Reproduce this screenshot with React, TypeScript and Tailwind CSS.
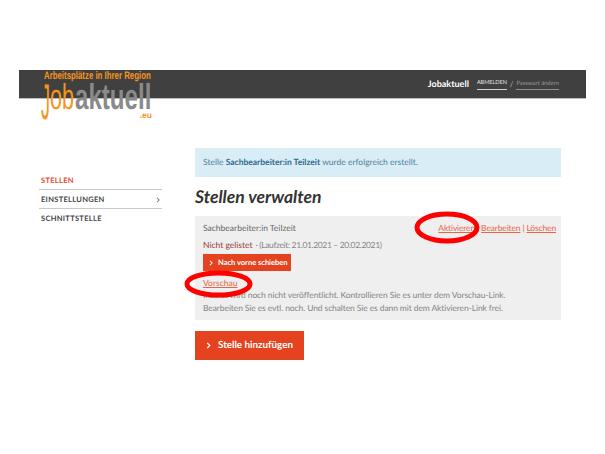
const font = "font-['Lato','Noto_Sans',sans-serif] [text-rendering:geometricPrecision]";

function Chevron({ className }: { className?: string }) {
  return (
    <svg viewBox="0 0 8 8" className={className} fill="none" stroke="currentColor" strokeWidth="1.4">
      <path d="M2.5 1 L5.5 4 L2.5 7" />
    </svg>
  );
}

function Logo() {
  return (
    <div className="absolute left-[44px] top-[71px] w-[108px] h-[52px] font-['Liberation_Sans',sans-serif] whitespace-nowrap">
      <div className="text-[#f7941d] text-[11px] font-bold leading-[11px] origin-left scale-x-[0.713]">
        Arbeitsplätze in Ihrer Region
      </div>
      <div className="absolute left-[-3px] top-[11px] text-[#f7941d] text-[50px] leading-[40px] origin-left scale-x-[0.36]">J</div>
      <div className="absolute left-[6px] top-[12px] text-[#f7941d] text-[36px] leading-[28px] origin-left scale-x-[0.6]">ob</div>
      <div className="absolute left-[31px] top-[12px] text-[#8a8a8a] text-[36px] font-bold leading-[28px] origin-left scale-x-[0.67]">aktuell</div>
      <div className="absolute right-0 top-[40px] text-[#f7941d] text-[8.5px] leading-[9px] font-bold">.eu</div>
    </div>
  );
}

function Header() {
  return (
    <header className="h-[29px] bg-[#404040] border-b-[1px] border-[#bdbdbd] flex items-center justify-end pr-[27px] whitespace-nowrap">
      <span className="text-white text-[9px] font-bold mr-[8px]">Jobaktuell</span>
      <a className="text-[#e0e0e0] text-[5.5px] border-b border-[#cfcfcf] leading-[11px]">ABMELDEN</a>
      <span className="text-[#bdbdbd] text-[8px] mx-[3px]">/</span>
      <a className="text-[#999] text-[5.8px] border-b border-[#8f8f8f] leading-[11px]">Passwort ändern</a>
    </header>
  );
}

function Sidebar() {
  return (
    <nav className="w-[123px] ml-[20px] text-[7.5px] font-bold tracking-[0.3px] shrink-0 pt-[23px]">
      <div className="h-[19px] flex items-center pl-[2px] pt-[1px] text-[#e8452a] border-b border-[#c9c9c9]">STELLEN</div>
      <div className="h-[19px] flex items-center justify-between pl-[2px] pt-[1px] pr-[1px] text-[#444] border-b border-[#c9c9c9]">
        EINSTELLUNGEN
        <Chevron className="w-[6px] h-[6px] text-[#777]" />
      </div>
      <div className="h-[19px] flex items-center pl-[2px] text-[#444]">SCHNITTSTELLE</div>
    </nav>
  );
}

function JobCard() {
  return (
    <section className="mt-[9px] h-[104px] bg-[#efefef] px-[8px] pt-[5px] text-[8.5px] text-[#858585] whitespace-nowrap">
      <div className="flex justify-between h-[14px] items-center">
        <span className="text-[#666]">Sachbearbeiter:in Teilzeit</span>
        <span className="text-[#e8654a] mr-[-3px] tracking-[-0.15px]">
          <a className="underline">Aktivieren</a> | <a className="underline">Bearbeiten</a> | <a className="underline">Löschen</a>
        </span>
      </div>
      <div className="mt-[3px] h-[14px] flex items-center">
        <span className="text-[#9a3b3b]">Nicht gelistet</span>
        <span className="ml-[3px] tracking-[-0.35px]">· (Laufzeit: 21.01.2021 – 20.02.2021)</span>
      </div>
      <a className="mt-[2px] w-[88px] h-[17px] bg-[#e5431f] text-white text-[7.5px] font-bold flex items-center pl-[5px] gap-[4px]">
        <Chevron className="w-[6px] h-[6px]" />
        Nach vorne schieben
      </a>
      <div className="mt-[5px] h-[14px] flex items-center">
        <a className="underline text-[#e8654a]">Vorschau</a>
      </div>
      <p className="leading-[13px] mt-[-1px] tracking-[-0.1px]">
        Inserat wird noch nicht veröffentlicht. Kontrollieren Sie es unter dem Vorschau-Link.
        <br />
        Bearbeiten Sie es evtl. noch. Und schalten Sie es dann mit dem Aktivieren-Link frei.
      </p>
    </section>
  );
}

export default function App() {
  return (
    <div className={`relative w-[605px] h-[454px] bg-white overflow-hidden pt-[70px] px-[19px] ${font}`}>
      <Header />
      <Logo />
      <div className="flex mt-[49px]">
        <Sidebar />
        <main className="ml-[33px] w-[366px]">
          <div className="h-[29px] bg-[#d9edf7] text-[#4f7f99] text-[8.5px] flex items-center pl-[8px]">
            <span>
              Stelle <b className="text-[#2f6a8a]">Sachbearbeiter:in Teilzeit</b> wurde erfolgreich erstellt.
            </span>
          </div>
          <h1 className="mt-[10px] h-[20px] leading-[20px] text-[17.5px] font-bold italic text-[#333]">Stellen verwalten</h1>
          <JobCard />
          <a className="mt-[11px] w-[109px] h-[29px] bg-[#e5431f] text-white text-[9.8px] font-bold flex items-center pl-[10px] gap-[6px] whitespace-nowrap">
            <Chevron className="w-[7px] h-[7px]" />
            Stelle hinzufügen
          </a>
        </main>
      </div>
      <svg viewBox="0 0 605 454" className="absolute inset-0 w-[605px] h-[454px] pointer-events-none" fill="none" stroke="#f00">
        <ellipse cx="447" cy="227.5" rx="30" ry="13.5" strokeWidth="5" />
        <ellipse cx="218.5" cy="284" rx="31.5" ry="11" strokeWidth="5" />
      </svg>
    </div>
  );
}
